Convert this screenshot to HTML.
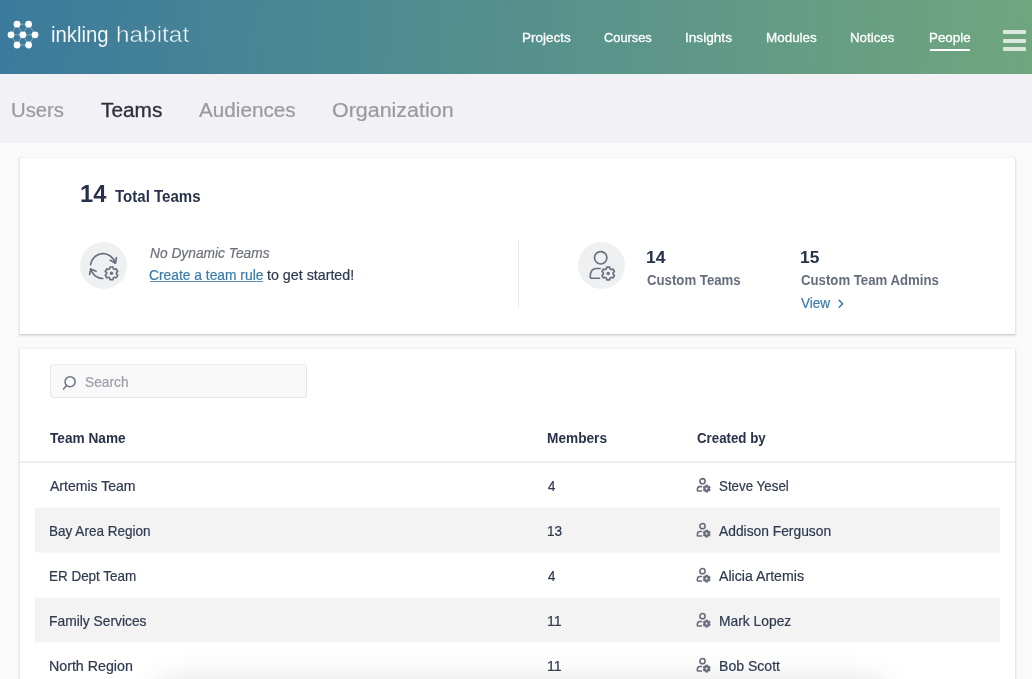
<!DOCTYPE html>
<html lang="en"><head><meta charset="utf-8"><title>Teams - Inkling Habitat</title>
<style>
html,body{margin:0;padding:0;}
html{background:#fafafa;}
body{width:1032px;height:679px;overflow:hidden;position:relative;background:#fafafa;font-family:"Liberation Sans",sans-serif;}
.abs{position:absolute;}
#hdr{position:absolute;left:0;top:0;width:1032px;height:74px;background:linear-gradient(93deg,#3b7a9c 0%,#70a67e 100%);}
#subnav{position:absolute;left:0;top:74px;width:1032px;height:69px;background:#f1f1f6;}
.card{position:absolute;background:#fff;box-shadow:0 1px 2px 1px rgba(50,55,80,.125),0 1px 1px rgba(50,55,80,.10);}
#card1{left:20px;top:158px;width:995px;height:176px;}
#card2{left:20px;top:349px;width:995px;height:340px;}
.stripe{position:absolute;left:35px;width:965px;height:46px;background:linear-gradient(#f9f9f9 0,#f9f9f9 1px,#f3f3f3 1px,#f3f3f3 45px,#f9f9f9 45px,#f9f9f9 46px);}
.ic{position:absolute;width:47px;height:47px;border-radius:50%;background:#eff0f2;}
#txt{position:absolute;left:0;top:0;width:1032px;height:679px;will-change:transform;}
#txt .t{position:absolute;transform-origin:0 0;white-space:nowrap;line-height:1;font-family:"Liberation Sans",sans-serif;}
svg{position:absolute;overflow:visible;}

</style></head>
<body>
<div id="hdr"></div>
<!-- logo mark -->
<svg style="left:0;top:0" width="60" height="74" viewBox="0 0 60 74">
  <g stroke="#ffffff" stroke-opacity=".35" stroke-width="1" fill="none">
    <path d="M17 24.2H28.6M11 34.8H35M17 45H28.6M17 24.2L11 34.8L17 45M28.6 24.2L35 34.8L28.6 45M17 24.2L28.6 45M28.6 24.2L17 45"/>
  </g>
  <g fill="#ffffff">
    <circle cx="17" cy="24.2" r="3.4"/><circle cx="28.6" cy="24.2" r="3.4"/>
    <circle cx="11" cy="34.8" r="3.4"/><circle cx="22.9" cy="34.8" r="3.4"/><circle cx="35" cy="34.8" r="3.4"/>
    <circle cx="17" cy="45" r="3.4"/><circle cx="28.6" cy="45" r="3.4"/>
  </g>
</svg>
<!-- People underline + hamburger -->
<div class="abs" style="left:930px;top:49px;width:40px;height:2px;background:#fff;"></div>
<div class="abs" style="left:1003px;top:30px;width:22.5px;height:4px;border-radius:1px;background:rgba(255,255,255,.74);"></div>
<div class="abs" style="left:1003px;top:38.5px;width:22.5px;height:4px;border-radius:1px;background:rgba(255,255,255,.74);"></div>
<div class="abs" style="left:1003px;top:47px;width:22.5px;height:4px;border-radius:1px;background:rgba(255,255,255,.74);"></div>

<div id="subnav"></div>

<div id="card1" class="card"></div>
<div class="ic" style="left:79.7px;top:242.4px;"></div>
<div class="ic" style="left:577.5px;top:242.4px;"></div>
<div class="abs" style="left:517.5px;top:240px;width:1.5px;height:68px;background:#e9e9ec;"></div>

<!-- sync + gear icon -->
<svg style="left:0;top:0" width="1032" height="679" viewBox="0 0 1032 679" fill="none" stroke="#6a6f7f" stroke-width="1.7" stroke-linecap="round" stroke-linejoin="round">
  <defs>
    <g id="gear"><path d="M-1.71 -4.70L-1.53 -6.37L1.53 -6.37L1.71 -4.70L3.21 -3.83L4.75 -4.51L6.28 -1.86L4.92 -0.87L4.92 0.87L6.28 1.86L4.75 4.51L3.21 3.83L1.71 4.70L1.53 6.37L-1.53 6.37L-1.71 4.70L-3.21 3.83L-4.75 4.51L-6.28 1.86L-4.92 0.87L-4.92 -0.87L-6.28 -1.86L-4.75 -4.51L-3.21 -3.83Z" stroke-width="1.6"/><circle cx="0" cy="0" r="1.75" fill="#6a6f7f" stroke="none"/></g>
  </defs>
  <path d="M90.6 264.7A12.5 12.5 0 0 1 115.1 263"/>
  <path d="M110.3 260.3L115.5 263.2L116.4 257.5"/>
  <path d="M90.8 269.1A12.5 12.5 0 0 0 102.7 278.5"/>
  <path d="M89.6 274.4L90.7 268.9L96 271.3"/>
  <use href="#gear" x="111.5" y="273.35"/>
  <!-- user + gear -->
  <circle cx="600.7" cy="257.8" r="6.2" stroke-width="1.6"/>
  <path d="M600.2 268.5H596.4C592.6 268.5 590.4 271.6 590.2 276.2C590.2 277.6 590.8 278.3 592 278.3H599.6" stroke-width="1.6"/>
  <use href="#gear" x="608.2" y="273.5"/>
  <!-- View chevron -->
  <path d="M839.2 300.4L842.6 303.8L839.2 307.2" stroke="#3a7ca8" stroke-width="1.6"/>
</svg>

<div id="card2" class="card"></div>
<div class="abs" style="left:50px;top:364px;width:254.5px;height:31.5px;border:1px solid #e5e5e9;border-top-color:#ebebee;border-radius:3.5px;background:#f9f9fa;"></div>
<svg style="left:0;top:0" width="1032" height="679" viewBox="0 0 1032 679" fill="none" stroke="#6f7482" stroke-width="1.55" stroke-linecap="round">
  <circle cx="70.1" cy="381.7" r="5.05"/><path d="M66.5 385.5L63.5 388.9"/>
</svg>
<div class="abs" style="left:20px;top:461px;width:995px;height:2px;background:linear-gradient(#f4f4f6,#e9e9ec);"></div>
<div class="stripe" style="top:507px;"></div>
<div class="stripe" style="top:597px;"></div>
<!-- row creator icons -->
<svg style="left:0;top:0" width="1032" height="679" viewBox="0 0 1032 679">
  <defs>
    <g id="ug" fill="none" stroke="#676c7c" stroke-width="1.55" stroke-linecap="round" stroke-linejoin="round">
      <circle cx="5.7" cy="3.6" r="2.6"/>
      <path d="M4.7 9H2.9C1.4 9 0.5 10.6 0.5 12.6C0.5 13.1 0.8 13.4 1.3 13.4H4.7"/>
      <path transform="translate(9.9 11)" d="M-1.22 -2.74L-1.00 -3.72L1.00 -3.72L1.22 -2.74L1.76 -2.43L2.72 -2.72L3.72 -1.00L2.98 -0.31L2.98 0.31L3.72 1.00L2.72 2.72L1.76 2.43L1.22 2.74L1.00 3.72L-1.00 3.72L-1.22 2.74L-1.76 2.43L-2.72 2.72L-3.72 1.00L-2.98 0.31L-2.98 -0.31L-3.72 -1.00L-2.72 -2.72L-1.76 -2.43ZM1.3 0A1.3 1.3 0 1 0 -1.3 0A1.3 1.3 0 1 0 1.3 0Z" fill="#676c7c" fill-rule="evenodd" stroke-width=".5"/>
    </g>
  </defs>
  <use href="#ug" x="696.8" y="477.6"/>
  <use href="#ug" x="696.8" y="522.6"/>
  <use href="#ug" x="696.8" y="567.6"/>
  <use href="#ug" x="696.8" y="612.6"/>
  <use href="#ug" x="696.8" y="657.6"/>
</svg>
<!-- soft glow of a floating element just below the fold -->
<div class="abs" style="left:168px;top:691px;width:706px;height:40px;border-radius:6px;background:#fff;box-shadow:0 0 28px 11px rgba(70,75,90,.17);"></div>
<div class="abs" style="left:150.2px;top:281px;width:113px;height:1px;background:#5b93b8;"></div>

<div id="txt">
<span class="t" style="left:51.28px;top:25.00px;font-size:21.5px;transform:scaleX(0.9448);color:#ffffff;-webkit-text-stroke:.12px #3f7e9a;">inkling</span>
<span class="t" style="left:115.90px;top:25.00px;font-size:21.5px;transform:scaleX(1.1333);color:#ffffff;-webkit-text-stroke:.5px #44829a;">habitat</span>
<span class="t" style="left:521.58px;top:31.00px;font-size:13.2px;transform:scaleX(1.0205);color:#ffffff;-webkit-text-stroke:.3px #fff;">Projects</span>
<span class="t" style="left:603.91px;top:31.00px;font-size:13.2px;transform:scaleX(0.9720);color:#ffffff;-webkit-text-stroke:.3px #fff;">Courses</span>
<span class="t" style="left:685.27px;top:31.00px;font-size:13.2px;transform:scaleX(1.0328);color:#ffffff;-webkit-text-stroke:.3px #fff;">Insights</span>
<span class="t" style="left:765.98px;top:31.00px;font-size:13.2px;transform:scaleX(1.0186);color:#ffffff;-webkit-text-stroke:.3px #fff;">Modules</span>
<span class="t" style="left:850.39px;top:31.00px;font-size:13.2px;transform:scaleX(1.0105);color:#ffffff;-webkit-text-stroke:.3px #fff;">Notices</span>
<span class="t" style="left:928.89px;top:31.00px;font-size:13.2px;transform:scaleX(1.0138);color:#ffffff;-webkit-text-stroke:.3px #fff;">People</span>
<span class="t" style="left:10.65px;top:100.60px;font-size:19.6px;transform:scaleX(1.0347);color:#9b9b9e;-webkit-text-stroke:.22px currentColor;">Users</span>
<span class="t" style="left:100.87px;top:100.60px;font-size:19.6px;transform:scaleX(1.0619);color:#2e2e3c;-webkit-text-stroke:.3px #2e2e3c;">Teams</span>
<span class="t" style="left:199.00px;top:100.60px;font-size:19.6px;transform:scaleX(1.0567);color:#9b9b9e;-webkit-text-stroke:.22px currentColor;">Audiences</span>
<span class="t" style="left:331.91px;top:100.60px;font-size:19.6px;transform:scaleX(1.0943);color:#9b9b9e;-webkit-text-stroke:.22px currentColor;">Organization</span>
<span class="t" style="left:79.78px;top:183.30px;font-size:23.3px;transform:scaleX(1.0144);color:#27324a;font-weight:700;">14</span>
<span class="t" style="left:114.56px;top:189.30px;font-size:15.8px;transform:scaleX(0.9528);color:#27324a;font-weight:700;">Total Teams</span>
<span class="t" style="left:149.72px;top:245.60px;font-size:14.4px;transform:scaleX(0.9561);color:#6d717c;font-style:italic;-webkit-text-stroke:.22px currentColor;">No Dynamic Teams</span>
<span class="t" style="left:149.48px;top:267.60px;font-size:14.4px;transform:scaleX(0.9597);color:#3a7ca8;-webkit-text-stroke:.22px currentColor;">Create a team rule</span>
<span class="t" style="left:267.25px;top:267.60px;font-size:14.4px;transform:scaleX(0.9908);color:#2f3a4f;-webkit-text-stroke:.22px currentColor;">to get started!</span>
<span class="t" style="left:646.26px;top:250.10px;font-size:16.9px;transform:scaleX(1.0366);color:#27324a;font-weight:700;">14</span>
<span class="t" style="left:646.83px;top:273.30px;font-size:14.0px;transform:scaleX(0.9435);color:#656c7d;font-weight:700;">Custom Teams</span>
<span class="t" style="left:799.97px;top:250.10px;font-size:16.9px;transform:scaleX(1.0261);color:#27324a;font-weight:700;">15</span>
<span class="t" style="left:800.53px;top:273.30px;font-size:14.0px;transform:scaleX(0.9425);color:#656c7d;font-weight:700;">Custom Team Admins</span>
<span class="t" style="left:801.06px;top:295.70px;font-size:14.4px;transform:scaleX(0.9431);color:#3a7ca8;-webkit-text-stroke:.22px currentColor;">View</span>
<span class="t" style="left:84.88px;top:375.00px;font-size:14.4px;transform:scaleX(0.9545);color:#9b9ea6;-webkit-text-stroke:.22px currentColor;">Search</span>
<span class="t" style="left:50.06px;top:431.20px;font-size:14.0px;transform:scaleX(0.9759);color:#27324a;font-weight:700;">Team Name</span>
<span class="t" style="left:547.12px;top:431.20px;font-size:14.0px;transform:scaleX(0.9767);color:#27324a;font-weight:700;">Members</span>
<span class="t" style="left:696.53px;top:431.20px;font-size:14.0px;transform:scaleX(0.9491);color:#27324a;font-weight:700;">Created by</span>
<span class="t" style="left:49.60px;top:478.70px;font-size:14.4px;transform:scaleX(0.9752);color:#2f3a4f;-webkit-text-stroke:.22px currentColor;">Artemis Team</span>
<span class="t" style="left:547.57px;top:478.70px;font-size:14.4px;transform:scaleX(0.9241);color:#2f3a4f;-webkit-text-stroke:.22px currentColor;">4</span>
<span class="t" style="left:718.90px;top:478.70px;font-size:14.4px;transform:scaleX(0.9279);color:#2f3a4f;-webkit-text-stroke:.22px currentColor;">Steve Yesel</span>
<span class="t" style="left:49.02px;top:523.70px;font-size:14.4px;transform:scaleX(0.9409);color:#2f3a4f;-webkit-text-stroke:.22px currentColor;">Bay Area Region</span>
<span class="t" style="left:547.16px;top:523.70px;font-size:14.4px;transform:scaleX(0.9448);color:#2f3a4f;-webkit-text-stroke:.22px currentColor;">13</span>
<span class="t" style="left:719.40px;top:523.70px;font-size:14.4px;transform:scaleX(0.9595);color:#2f3a4f;-webkit-text-stroke:.22px currentColor;">Addison Ferguson</span>
<span class="t" style="left:49.03px;top:568.70px;font-size:14.4px;transform:scaleX(0.9348);color:#2f3a4f;-webkit-text-stroke:.22px currentColor;">ER Dept Team</span>
<span class="t" style="left:547.57px;top:568.70px;font-size:14.4px;transform:scaleX(0.9241);color:#2f3a4f;-webkit-text-stroke:.22px currentColor;">4</span>
<span class="t" style="left:719.40px;top:568.70px;font-size:14.4px;transform:scaleX(0.9837);color:#2f3a4f;-webkit-text-stroke:.22px currentColor;">Alicia Artemis</span>
<span class="t" style="left:49.00px;top:613.70px;font-size:14.4px;transform:scaleX(0.9604);color:#2f3a4f;-webkit-text-stroke:.22px currentColor;">Family Services</span>
<span class="t" style="left:547.11px;top:613.70px;font-size:14.4px;transform:scaleX(0.9887);color:#2f3a4f;-webkit-text-stroke:.22px currentColor;">11</span>
<span class="t" style="left:719.00px;top:613.70px;font-size:14.4px;transform:scaleX(0.9611);color:#2f3a4f;-webkit-text-stroke:.22px currentColor;">Mark Lopez</span>
<span class="t" style="left:48.96px;top:658.70px;font-size:14.4px;transform:scaleX(0.9885);color:#2f3a4f;-webkit-text-stroke:.22px currentColor;">North Region</span>
<span class="t" style="left:547.11px;top:658.70px;font-size:14.4px;transform:scaleX(0.9887);color:#2f3a4f;-webkit-text-stroke:.22px currentColor;">11</span>
<span class="t" style="left:718.98px;top:658.70px;font-size:14.4px;transform:scaleX(0.9770);color:#2f3a4f;-webkit-text-stroke:.22px currentColor;">Bob Scott</span>
</div>
</body></html>
